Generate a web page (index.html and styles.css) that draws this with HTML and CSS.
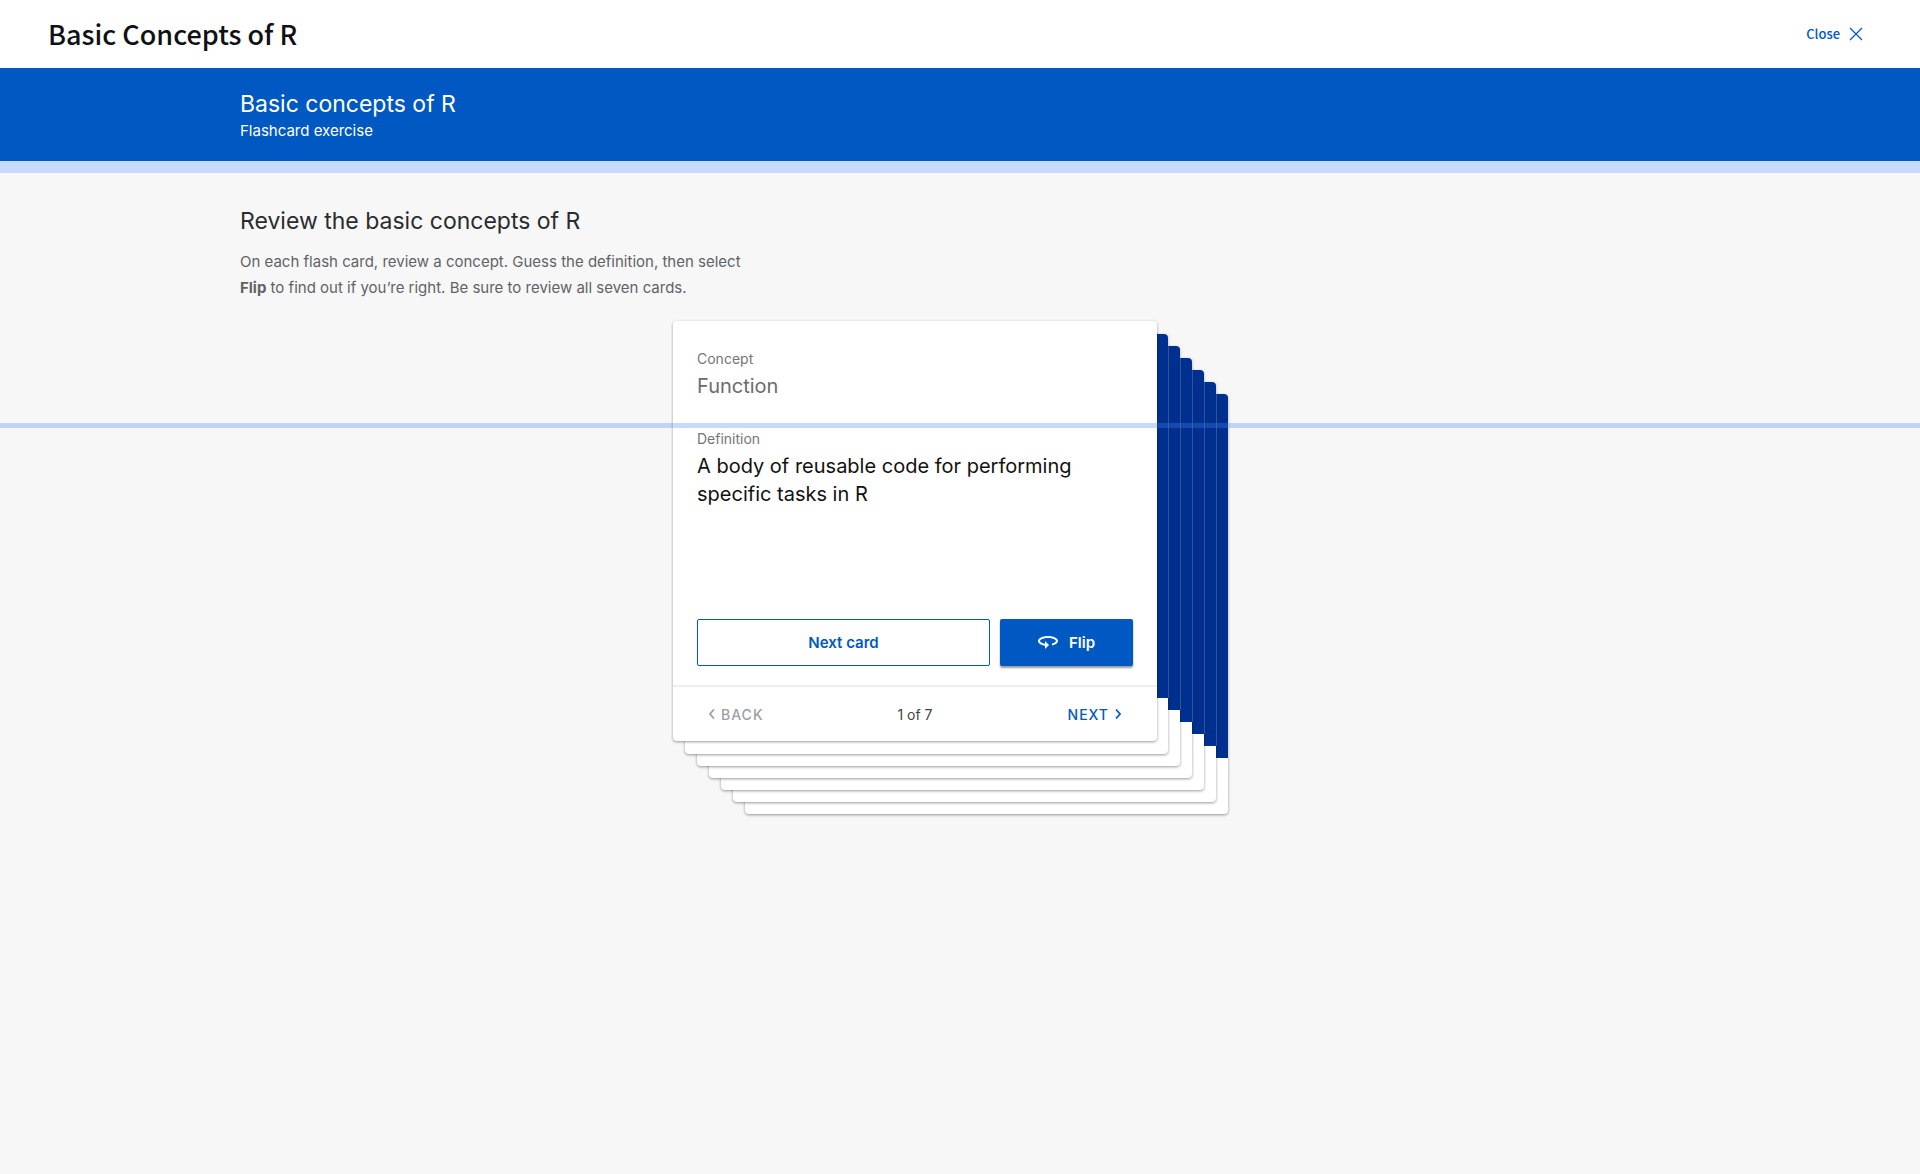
FILE: index.html
```html
<!DOCTYPE html>
<html lang="en">
<head>
<meta charset="utf-8">
<meta name="viewport" content="width=device-width, initial-scale=1">
<title>Basic Concepts of R</title>
<link rel="stylesheet" href="styles.css">
</head>
<body>
<header class="topbar">
  <h1 class="topbar-title">Basic Concepts of R</h1>
  <button class="close" type="button">Close
    <svg width="14" height="14" viewBox="0 0 14 14" fill="none" stroke="currentColor" stroke-width="1.2" aria-hidden="true"><path d="M1 1l12 12M13 1L1 13"/></svg>
  </button>
</header>
<section class="banner">
  <h2 class="banner-title">Basic concepts of R</h2>
  <p class="banner-sub">Flashcard exercise</p>
</section>
<main class="exercise">
  <h3 class="exercise-title">Review the basic concepts of R</h3>
  <p class="exercise-text">On each flash card, review a concept. Guess the definition, then select <strong>Flip</strong> to find out if you’re right. Be sure to review all seven cards.</p>
  <div class="deck">
    <div class="sheet sheet-6"></div>
    <div class="sheet sheet-5"></div>
    <div class="sheet sheet-4"></div>
    <div class="sheet sheet-3"></div>
    <div class="sheet sheet-2"></div>
    <div class="sheet sheet-1"></div>
    <article class="card">
      <div class="card-body">
        <p class="label">Concept</p>
        <p class="concept">Function</p>
        <p class="label">Definition</p>
        <p class="definition">A body of reusable code for performing specific tasks in R</p>
        <div class="actions">
          <button class="btn btn-next" type="button">Next card</button>
          <button class="btn btn-flip" type="button">
            <svg width="20" height="13" viewBox="2 7 20 13" fill="currentColor" aria-hidden="true"><path d="M12 7C6.480 7 2 9.240 2 12c0 2.240 2.940 4.130 7 4.770V20l4-4-4-4v2.730c-3.150-.56-5-1.900-5-2.730 0-1.060 3.040-3 8-3s8 1.940 8 3c0 .73-1.460 1.890-4 2.530v2.050c3.530-.77 6-2.530 6-4.580 0-2.760-4.480-5-10-5z"/></svg>
            Flip
          </button>
        </div>
      </div>
      <footer class="pager">
        <button class="page page-back" type="button" disabled>
          <svg width="6" height="10" viewBox="0 0 6 10" fill="none" stroke="currentColor" stroke-width="1.700" aria-hidden="true"><path d="M5 .5L1 5l4 4.500"/></svg>
          BACK
        </button>
        <span class="count">1 of 7</span>
        <button class="page page-next" type="button">
          NEXT
          <svg width="6" height="10" viewBox="0 0 6 10" fill="none" stroke="currentColor" stroke-width="1.700" aria-hidden="true"><path d="M1 .5L5 5 1 9.500"/></svg>
        </button>
      </footer>
    </article>
  </div>
  <div class="marker"></div>
</main>
</body>
</html>
```
FILE: styles.css
```css
* { box-sizing: border-box; }

body {
  margin: 0;
  min-height: 100vh;
  background: #f7f7f7;
  color: #202124;
  font-family: Inter, "Liberation Sans", sans-serif;
}

h1, h2, h3, p { margin: 0; font-weight: 400; }

button {
  padding: 0;
  border: 0;
  background: none;
  font: inherit;
  cursor: pointer;
}

.topbar {
  display: flex;
  align-items: center;
  justify-content: space-between;
  height: 68px;
  padding: 0 57px 0 48px;
  background: #fff;
  font-family: "Noto Sans CJK SC", "Noto Sans", sans-serif;
}

.topbar-title {
  color: #0f1114;
  font-size: 27px;
  line-height: 36px;
  font-weight: 500;
}

.close {
  display: flex;
  align-items: center;
  gap: 9px;
  color: #0056d2;
  font-size: 13px;
  line-height: 20px;
  font-weight: 500;
}

.banner {
  padding: 20px 12.5%;
  border-bottom: 12px solid #c8dafc;
  background: #0059c3;
  color: #fff;
}

.banner-title { font-size: 23px; line-height: 32px; }
.banner-sub { font-size: 15px; line-height: 21px; }

.exercise {
  position: relative;
  padding: 32px 12.5%;
}

.exercise-title { font-size: 23px; line-height: 32px; color: #2a2c30; }

.exercise-text {
  max-width: 520px;
  margin-top: 12px;
  color: #5f6368;
  font-size: 15px;
  line-height: 26px;
}

.exercise-text strong { font-weight: 700; }

/* The deck sits slightly left of centre so the fanned cards balance it. */
.deck {
  position: relative;
  width: 484px;
  margin: 20px 0 72px calc((100% - 574px) / 2);
}

.sheet {
  position: absolute;
  width: 483px;
  height: 100%;
  border-radius: 4px;
  background: #fff;
  box-shadow: 0 1px 3px rgba(0, 0, 0, .4);
}

.sheet::before {
  content: "";
  display: block;
  height: calc(100% - 56px);
  border-radius: 4px 4px 0 0;
  background: #00308f;
  box-shadow: 1px 0 0 rgba(255, 255, 255, .2);
}

.sheet-1 { top: 13px; left: 12px; }
.sheet-2 { top: 25px; left: 24px; }
.sheet-3 { top: 37px; left: 36px; }
.sheet-4 { top: 49px; left: 48px; }
.sheet-5 { top: 61px; left: 60px; }
.sheet-6 { top: 73px; left: 72px; }

.card {
  position: relative;
  border-radius: 4px;
  background: #fff;
  box-shadow: 0 1px 3px rgba(0, 0, 0, .4);
}

.card-body { padding: 28px 24px 19px; }

.label {
  color: #757575;
  font-size: 14px;
  line-height: 20px;
}

.concept {
  margin: 3px 0 29px;
  color: #6b6b6b;
  font-size: 20px;
  line-height: 28px;
}

.definition {
  min-height: 167px;
  margin-top: 3px;
  color: #111;
  font-size: 20px;
  line-height: 28px;
}

.actions {
  display: flex;
  gap: 10px;
}

.btn {
  display: flex;
  align-items: center;
  justify-content: center;
  gap: 11px;
  height: 47px;
  border-radius: 2px;
  font-size: 15px;
  font-weight: 600;
}

.btn-next {
  flex: 1;
  border: 1px solid #0059c3;
  color: #0059c3;
}

.btn-flip {
  width: 133px;
  background: #0059c3;
  box-shadow: 0 2px 2px rgba(0, 0, 0, .4);
  color: #fff;
}

.pager {
  display: grid;
  grid-template-columns: 1fr auto 1fr;
  align-items: center;
  height: 56px;
  padding: 0 36px;
  border-top: 2px solid #eee;
  font-size: 14px;
}

.page {
  display: flex;
  align-items: center;
  gap: 6px;
  font-weight: 500;
  letter-spacing: 1px;
}

.page-back { justify-self: start; color: #9aa0a6; }
.page-next { justify-self: end; color: #0059c3; }
.count { color: #444; }

.marker {
  position: absolute;
  top: 250px;
  left: 0;
  right: 0;
  height: 5px;
  background: rgba(70, 133, 244, .3);
}
```
